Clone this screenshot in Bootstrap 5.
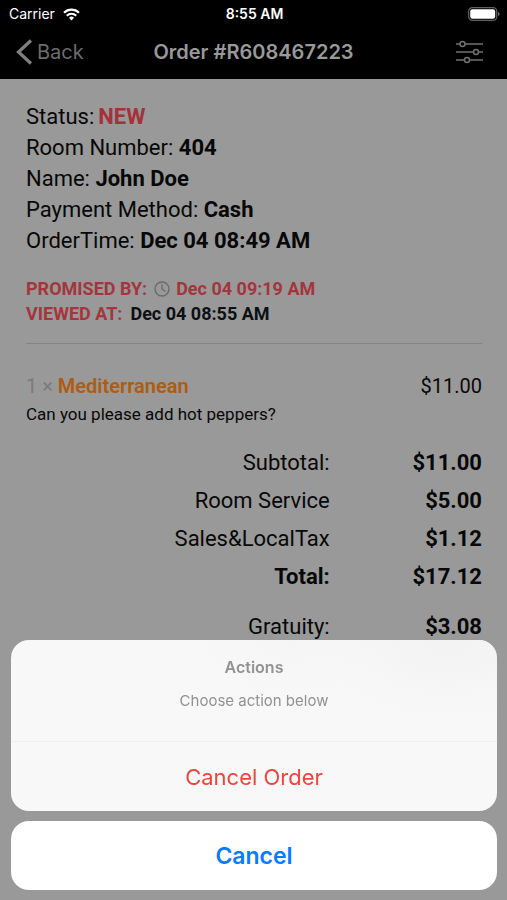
<!DOCTYPE html>
<html lang="en">
<head>
<meta charset="utf-8">
<meta name="viewport" content="width=device-width, initial-scale=1">
<title>Order #R608467223</title>
<link href="https://cdn.jsdelivr.net/npm/bootstrap@5.3.0/dist/css/bootstrap.min.css" rel="stylesheet">
<style>
body { background: #999; color: #080808; font-family: Roboto, "Liberation Sans", sans-serif; font-size: 22px; line-height: 31px; }
.app-head, .sheet { font-family: Inter, "Liberation Sans", sans-serif; }
.app-head { background: #000; }
.status-bar { height: 28px; font-size: 14px; line-height: 28px; padding: 0 7px 0 9px; }
.nav-bar { height: 51px; padding: 0 16px 3px; color: #999; }
.side { flex: 1 1 0; }
.back { color: #6c6c6c; font-size: 20px; line-height: 48px; }
.title { font-size: 20px; line-height: 48px; font-weight: 600; }
.order { padding: 22px 25px 0 26px; }
.status-new { color: #a3323a; }
.times { margin-top: 20px; font-size: 18px; line-height: 25px; font-weight: 700; color: #a3363c; }
.times .viewed { color: #0d1014; }
.clock { margin: 0 5px 0 6px; }
.rule { margin: 17px 0 28px; border-top: 1px solid #838383; opacity: 1; }
.item { font-size: 20px; line-height: 28px; }
.qty { color: #7b7b7b; }
.dish { color: #ad5c12; font-weight: 600; }
.note { font-size: 17px; line-height: 28px; }
.totals { margin-top: 16px; line-height: 38px; }
.totals th, .totals td { padding: 0; font-weight: 400; text-align: right; }
.totals th { width: 66.6%; }
.totals td, .totals .sum { font-weight: 700; }
.totals .gap-above > * { padding-top: 12px; }
.sheet { padding: 0 10px 10px 11px; }
.panel { background: #f8f8f8; border-radius: 18px; margin-bottom: 10px; }
.panel-top { background: radial-gradient(ellipse 130px 80px at 90% 0, #f2f2f2, transparent), radial-gradient(ellipse 100px 60px at 58% 0, #f5f5f5, transparent); height: 102px; padding-top: 17px; color: #929292; font-size: 15px; line-height: 20px; border-bottom: 1px solid #efefef; }
.panel-top h2 { font-size: 16px; line-height: 20px; margin-bottom: 14px; }
.sheet .btn { border: 0; border-radius: 0; width: 100%; height: 69px; font-size: 23px; line-height: 32px; }
.sheet .danger { color: #f0443c; font-size: 22px; }
.sheet .dismiss { color: #0a7aff; background: #fff; border-radius: 18px; font-weight: 600; }
</style>
</head>
<body>
<header class="app-head">
  <div class="status-bar d-flex align-items-center text-white">
    <div class="side d-flex align-items-center">
      <span>Carrier</span>
      <svg class="ms-2" width="17" height="13" viewBox="0 0 17 13" fill="none" stroke="#fff" stroke-width="2.2" aria-hidden="true"><path d="M1 4.7a10.6 10.6 0 0 1 15 0M3.8 7.7a6.7 6.7 0 0 1 9.4 0"/><path d="M6 9.8a3.6 3.6 0 0 1 5 0l-2.5 2.7z" fill="#fff" stroke="none"/></svg>
    </div>
    <span class="fw-semibold">8:55 AM</span>
    <div class="side d-flex justify-content-end">
      <svg width="32" height="14" viewBox="0 0 32 14" aria-hidden="true"><rect x=".7" y=".7" width="28" height="12.6" rx="3.6" fill="none" stroke="#626262" stroke-width="1.2"/><rect x="2.2" y="2.2" width="25" height="9.6" rx="2.2" fill="#fff"/><path d="M30 5v4q1.6-.5 1.6-2T30 5z" fill="#777"/></svg>
    </div>
  </div>
  <nav class="nav-bar d-flex">
    <div class="side d-flex">
      <a class="back d-flex align-items-center text-decoration-none" href="#">
        <svg class="me-1" width="17" height="26" viewBox="0 0 17 26" fill="none" stroke="#808080" stroke-width="3.2" aria-hidden="true"><path d="M15 1.5 2.5 13 15 24.5"/></svg>
        Back
      </a>
    </div>
    <h1 class="title m-0">Order #R608467223</h1>
    <div class="side d-flex justify-content-end align-items-center">
      <button class="btn p-0 border-0 d-flex me-2" type="button" aria-label="Filter">
        <svg width="27" height="24" viewBox="0 0 27 24" fill="none" stroke="#707070" stroke-width="1.5" aria-hidden="true"><path d="M0 4h4M9 4h18M0 12h17.5M22.5 12H27M0 20h8.5M13.5 20H27"/><circle cx="6.5" cy="4" r="2.5"/><circle cx="20" cy="12" r="2.5"/><circle cx="11" cy="20" r="2.5"/></svg>
      </button>
    </div>
  </nav>
</header>

<main class="order">
  <div>Status:<b class="status-new ms-1">NEW</b></div>
  <div>Room Number: <b>404</b></div>
  <div>Name: <b>John Doe</b></div>
  <div>Payment Method: <b>Cash</b></div>
  <div>OrderTime: <b>Dec 04 08:49 AM</b></div>

  <div class="times">
    <div class="d-flex align-items-center">PROMISED BY:
      <svg class="clock" width="18" height="18" viewBox="0 0 18 18" fill="none" stroke="#696969" stroke-width="1.3" aria-hidden="true"><circle cx="9" cy="9" r="7"/><path d="M9 4.5V9l3.5 2.5"/></svg>
      Dec 04 09:19 AM</div>
    <div>VIEWED AT:<span class="viewed ms-2">Dec 04 08:55 AM</span></div>
  </div>
  <hr class="rule">

  <div class="item d-flex justify-content-between">
    <div><span class="qty">1 ×</span> <b class="dish">Mediterranean</b></div>
    <span>$11.00</span>
  </div>
  <div class="note">Can you please add hot peppers?</div>

  <table class="totals w-100">
    <tbody>
      <tr><th scope="row">Subtotal:</th><td>$11.00</td></tr>
      <tr><th scope="row">Room Service</th><td>$5.00</td></tr>
      <tr><th scope="row">Sales&amp;LocalTax</th><td>$1.12</td></tr>
      <tr><th scope="row" class="sum">Total:</th><td>$17.12</td></tr>
      <tr class="gap-above"><th scope="row">Gratuity:</th><td>$3.08</td></tr>
    </tbody>
  </table>
</main>

<section class="sheet fixed-bottom text-center" role="dialog" aria-labelledby="sheet-title">
  <div class="panel overflow-hidden">
    <div class="panel-top">
      <h2 id="sheet-title" class="fw-semibold">Actions</h2>
      <p class="m-0">Choose action below</p>
    </div>
    <button class="btn danger" type="button">Cancel Order</button>
  </div>
  <button class="btn dismiss" type="button">Cancel</button>
</section>
<script src="https://cdn.jsdelivr.net/npm/bootstrap@5.3.0/dist/js/bootstrap.bundle.min.js"></script>
</body>
</html>
